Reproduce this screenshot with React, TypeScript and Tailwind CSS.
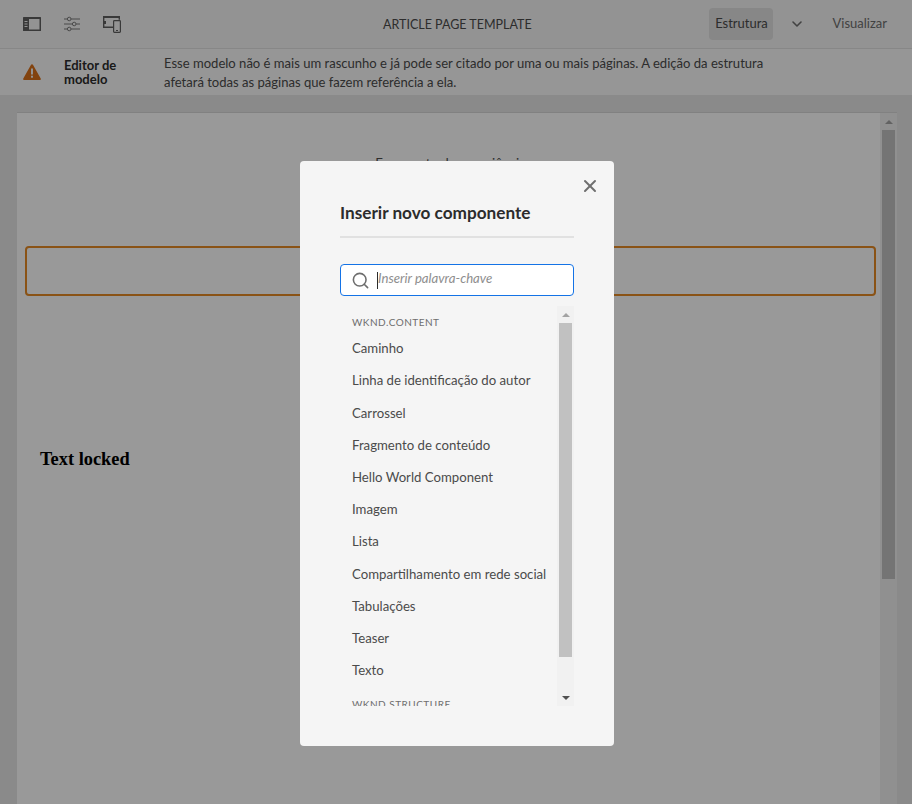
import { Search, X, ChevronDown } from "lucide-react";

const items = [
  "Caminho",
  "Linha de identificação do autor",
  "Carrossel",
  "Fragmento de conteúdo",
  "Hello World Component",
  "Imagem",
  "Lista",
  "Compartilhamento em rede social",
  "Tabulações",
  "Teaser",
  "Texto",
];

function RailIcon() {
  return (
    <svg width="18" height="14" viewBox="0 0 18 14" fill="none">
      <rect x="0" y="0" width="18" height="14" rx="0.5" fill="#5f5f5f" />
      <rect x="6" y="2" width="10.5" height="10.5" fill="#f5f5f5" />
      <rect x="1.5" y="4" width="3" height="1" fill="#f5f5f5" />
      <rect x="1.5" y="6.5" width="3" height="1" fill="#f5f5f5" />
      <rect x="1.5" y="9" width="3" height="1" fill="#f5f5f5" />
    </svg>
  );
}

function SlidersIcon() {
  return (
    <svg width="16" height="16" viewBox="0 0 16 16" fill="none" stroke="#7a7a7a" strokeWidth="1">
      <path d="M0 3h3.5M7 3h9M0 8h8.5M12 8h4M0 13h3.5M7 13h9" />
      <circle cx="5.2" cy="3" r="1.8" />
      <circle cx="10.2" cy="8" r="1.8" />
      <circle cx="5.2" cy="13" r="1.8" />
    </svg>
  );
}

function DevicesIcon() {
  return (
    <svg width="18" height="17" viewBox="0 0 18 17" fill="none">
      <path d="M0.7 0.7h15.6v3M10 11.3H0.7V0.7" stroke="#5f5f5f" strokeWidth="1.4" />
      <rect x="0" y="0" width="17" height="2" fill="#5f5f5f" />
      <rect x="1" y="5" width="2" height="3" fill="#5f5f5f" />
      <rect x="10.6" y="4.6" width="6.8" height="11.8" rx="0.8" stroke="#5f5f5f" strokeWidth="1.2" />
      <rect x="13" y="14" width="2" height="1" fill="#5f5f5f" />
    </svg>
  );
}

function AlertIcon() {
  return (
    <svg width="18" height="16" viewBox="0 0 18 16">
      <path d="M9 0.3c.5 0 .9.3 1.1.7l7.6 13.4c.4.7-.1 1.5-.9 1.5H1.2c-.8 0-1.3-.8-.9-1.5L7.9 1c.2-.4.6-.7 1.1-.7z" fill="#d9701a" />
      <rect x="8" y="4.5" width="2" height="6" fill="#f5f5f5" />
      <rect x="8" y="11.7" width="2" height="2" fill="#f5f5f5" />
    </svg>
  );
}

function Scrollbar({ thumb, rest }: { thumb: string; rest: string }) {
  return (
    <div className="flex h-full flex-col items-center bg-[#f1f1f1]">
      <div className="flex h-[17px] w-full shrink-0 items-center justify-center">
        <div className="h-0 w-0 border-x-[4px] border-b-[4px] border-x-transparent border-b-[#a3a3a3]" />
      </div>
      <div className={thumb} />
      <div className={rest} />
      <div className="flex h-[17px] w-full shrink-0 items-center justify-center">
        <div className="h-0 w-0 border-x-[4px] border-t-[4px] border-x-transparent border-t-[#505050]" />
      </div>
    </div>
  );
}

export default function App() {
  return (
    <div className="relative flex h-screen flex-col overflow-hidden bg-[#e6e6e6] font-['Lato','Noto_Sans',sans-serif] text-[#4b4b4b]">
      {/* barra superior */}
      <div className="relative flex h-[49px] shrink-0 items-center border-b border-[#e1e1e1] bg-[#f5f5f5]">
        <div className="ml-[23px] flex items-center gap-[23px]">
          <RailIcon />
          <SlidersIcon />
          <DevicesIcon />
        </div>
        <div className="absolute left-[383px] mt-[2px] text-[12.5px] text-[#4b4b4b]">ARTICLE PAGE TEMPLATE</div>
        <div className="ml-auto flex items-center text-[13px]">
          <div className="flex h-[32px] w-[64px] items-center justify-center rounded bg-[#e1e1e1]">Estrutura</div>
          <ChevronDown size={16} strokeWidth={2.4} className="ml-[16px] text-[#6e6e6e]" />
          <div className="mr-[25px] ml-[27px] text-[#6e6e6e]">Visualizar</div>
        </div>
      </div>

      {/* aviso */}
      <div className="flex h-[46px] shrink-0 items-center bg-[#fafafa]">
        <div className="ml-[23px] flex w-[41px] shrink-0">
          <AlertIcon />
        </div>
        <div className="w-[100px] shrink-0 text-[13px] leading-[14px] font-bold text-[#2c2c2c]">
          Editor de
          <br />
          modelo
        </div>
        <div className="w-[620px] pt-[1px] text-[13.05px] leading-[19px]">
          Esse modelo não é mais um rascunho e já pode ser citado por uma ou mais páginas. A edição da estrutura afetará todas as páginas que fazem referência a ela.
        </div>
      </div>

      {/* conteúdo */}
      <div className="flex min-h-0 flex-1 overflow-hidden pt-[17px] pr-[15px] pl-[17px]">
        <div className="flex h-[900px] flex-1 border-t border-[#d8d8d8] bg-white">
          <div className="flex-1 pr-[4px] pl-[8px]">
            <div className="pt-[40px] text-center text-[13.3px] leading-[20px]">Fragmento de experiência</div>
            <div className="mt-[73px] h-[50px] rounded border-2 border-[#e68a25]" />
            <div className="mt-[153px] pl-[15px] font-['Liberation_Serif',serif] text-[18.4px] leading-[21px] font-bold text-black">
              Text locked
            </div>
          </div>
          <div className="w-[17px] shrink-0">
            <Scrollbar thumb="h-[449px] w-[13px] shrink-0 bg-[#c1c1c1]" rest="flex-1" />
          </div>
        </div>
      </div>

      {/* modal */}
      <div className="absolute inset-0 bg-black/40 pt-[161px] pl-[300px]">
        <div className="h-[585px] w-[314px] rounded bg-[#f5f5f5] px-[40px] pt-[40px]">
          <div className="relative">
            <X size={20} strokeWidth={2.4} className="absolute top-[-25px] left-[240px] text-[#6e6e6e]" />
          </div>
          <div className="border-b-2 border-[#e1e1e1] pb-[11px] text-[17.2px] leading-[24px] font-bold text-[#2c2c2c]">
            Inserir novo componente
          </div>
          <div className="mt-[26px] flex h-[32px] items-center rounded border border-[#1473e6] bg-white pl-[10px]">
            <Search size={19} strokeWidth={2} className="text-[#6e6e6e]" />
            <div className="ml-[7px] h-[17px] w-px bg-[#2c2c2c]" />
            <span className="pb-[2px] text-[13.2px] text-[#8e8e8e] italic">Inserir palavra-chave</span>
          </div>
          <div className="mt-[10px] flex h-[400px]">
            <div className="min-w-0 flex-1 overflow-hidden pl-[12px]">
              <div className="pt-[9px] text-[10px] leading-[14px] tracking-[0.5px] text-[#6e6e6e]">WKND.CONTENT</div>
              <div className="pt-[4px]">
                {items.map((item) => (
                  <div key={item} className="flex h-[32.2px] items-center text-[13.2px] whitespace-nowrap text-[#4b4b4b]">
                    {item}
                  </div>
                ))}
              </div>
              <div className="pt-[10px] text-[10px] leading-[14px] tracking-[0.5px] text-[#6e6e6e]">WKND STRUCTURE</div>
            </div>
            <div className="w-[17px] shrink-0">
              <Scrollbar thumb="h-[334px] w-[13px] shrink-0 bg-[#c1c1c1]" rest="flex-1" />
            </div>
          </div>
        </div>
      </div>
    </div>
  );
}
